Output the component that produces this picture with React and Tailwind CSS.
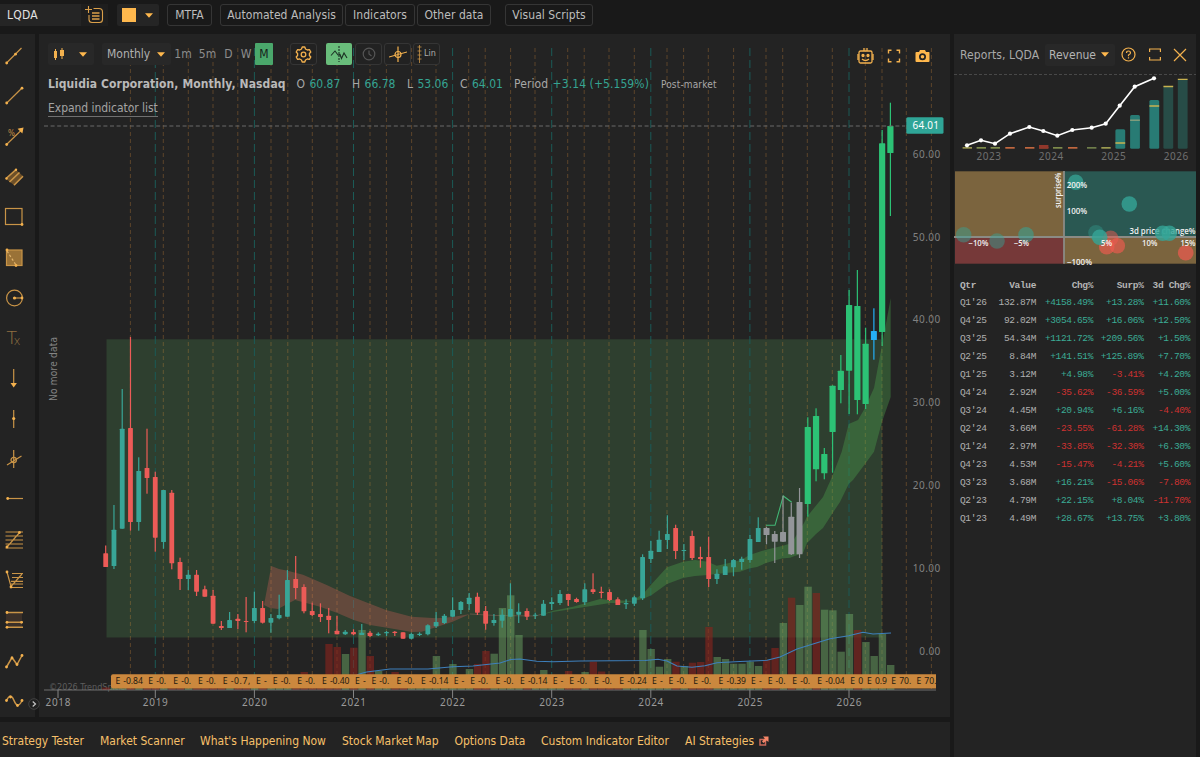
import React from "react";

const ACCENT = "#f3b14e";

/* ---------- market data (canvas coordinates of the price pane) ---------- */
const X0 = 105.7;
const STEP = 8.26;
const cx = (i) => X0 + i * STEP;

// [kind, high, body top, body bottom, low]
const candles = [
  ["r", 545.5, 553.3, 567, 567], ["t", 505, 529.7, 566, 569], ["t", 389, 428.7, 528.7, 528.7],
  ["r", 337, 428, 522, 530.7], ["t", 457.3, 471, 522, 530.7], ["r", 428.7, 468, 478, 493.7],
  ["r", 471.7, 477, 537.7, 551.7], ["t", 490, 490, 542, 548.7], ["r", 490, 492.7, 563.3, 569.3],
  ["r", 557.7, 562, 579, 590], ["t", 570, 574.7, 579, 590], ["r", 570, 574.7, 591.7, 596],
  ["r", 585.7, 589.3, 596.7, 596.7], ["r", 590, 595.7, 623.7, 623.7], ["r", 621, 626, 628, 630],
  ["t", 612, 620, 628, 628], ["r", 614, 618.7, 621, 629], ["r", 597, 621, 622, 632.3],
  ["t", 591.7, 608, 621, 623.3], ["r", 601, 608, 622.7, 623.5], ["t", 614, 618, 622.7, 632.7],
  ["t", 594.7, 615, 618.3, 619.3], ["t", 570, 580, 616.7, 616.7], ["r", 556, 579, 588, 599],
  ["r", 584.3, 587, 611.3, 613.3], ["r", 602.7, 611, 615, 616], ["r", 603.3, 614, 617, 622],
  ["r", 608, 615.7, 620, 633.3], ["r", 616, 630.7, 634.3, 634.3], ["t", 630, 631.7, 634.3, 635],
  ["r", 629.3, 632, 634.3, 635.3], ["t", 624, 632.7, 635, 635], ["r", 631, 632.7, 636, 637],
  ["t", 632.3, 633.7, 635.3, 636], ["t", 631, 632, 633.3, 636], ["r", 631, 631.7, 633, 636],
  ["r", 632.3, 632.3, 638.7, 638.7], ["t", 632.7, 634, 638.7, 639.3], ["t", 632.3, 633.7, 635, 636],
  ["t", 624.3, 625.3, 634.3, 635.3], ["t", 612, 622, 626.3, 628], ["t", 614, 615.7, 623, 624],
  ["t", 597.3, 610, 616.7, 616.7], ["t", 601, 602, 610, 614], ["t", 593, 597.7, 604, 610],
  ["r", 592.7, 596.7, 612.7, 615], ["r", 606, 611, 623.7, 629.7], ["t", 614, 620, 623, 625.7],
  ["t", 609.3, 614.7, 620.7, 627.7], ["t", 583.3, 609, 616.7, 616.7], ["t", 603.3, 611.7, 614.7, 623],
  ["r", 608.3, 611, 616.7, 620], ["t", 612.7, 614.7, 615.5, 619], ["t", 600, 603.7, 615.7, 615.7],
  ["t", 597.3, 602, 604, 610], ["t", 590, 594, 603, 605], ["r", 593.7, 594, 600, 606],
  ["r", 597.7, 599, 602, 602.7], ["t", 583.3, 589.3, 602.3, 605], ["r", 573.3, 589.3, 592, 594],
  ["r", 586.7, 591.7, 593, 598.3], ["r", 589.3, 592, 600, 601], ["r", 597.3, 599.3, 605, 605],
  ["t", 599.3, 603, 604.3, 609], ["t", 595.7, 597.3, 603.7, 606], ["t", 554.3, 557, 598.3, 600],
  ["t", 541, 550.7, 559, 563], ["t", 530.7, 539.7, 552, 552], ["t", 515.3, 534, 540, 549],
  ["r", 524.7, 528, 551, 559], ["t", 544, 550, 551, 560], ["r", 530.7, 536, 558, 560],
  ["r", 546.7, 557, 559, 567.7], ["r", 536.7, 557, 579, 587], ["t", 569.3, 573.7, 579, 584],
  ["t", 559, 566.3, 575, 575], ["t", 559, 560, 567.3, 576], ["t", 556.7, 558.7, 562, 569.7],
  ["t", 535, 539, 560, 562.7], ["t", 517.3, 528, 542, 542], ["g", 526.7, 528, 535, 544.3],
  ["g", 531, 534, 541.7, 563], ["g", 495.7, 532, 541.7, 542], ["g", 502.7, 516.7, 554.3, 555],
  ["g", 488, 502, 554.3, 558], ["b", 417.3, 427, 504, 516.7], ["b", 408.3, 416, 469.3, 481.3],
  ["b", 448, 454, 473.3, 479.3], ["b", 385.3, 385.7, 432, 472.7], ["b", 355, 370.7, 390, 403.3],
  ["b", 290, 305, 370.7, 414], ["b", 270, 306, 400, 414.3], ["b", 327.7, 343.7, 404, 409],
  ["c", 308.3, 331, 340, 359.7], ["b", 130, 143.3, 332, 346], ["b", 102.7, 126, 153, 216],
];
const candleFill = { r: "#ec5b57", t: "#38a597", g: "#939599", b: "#2cc275", c: "#25aef4" };
const candleWidth = { r: 4.8, t: 4.8, g: 6, b: 6.2, c: 6 };

// month index -> [direction, top]
const volume = {
  24: ["r", 672], 27: ["r", 644], 28: ["r", 647], 29: ["g", 654], 30: ["r", 647.7], 31: ["g", 630],
  32: ["r", 656], 33: ["g", 671], 35: ["r", 672], 40: ["g", 656], 42: ["g", 664], 44: ["g", 669],
  45: ["r", 664], 46: ["r", 651], 47: ["g", 653.7], 48: ["g", 608], 49: ["g", 595.3], 50: ["g", 635],
  51: ["r", 674], 53: ["g", 670], 56: ["r", 671], 58: ["g", 672], 59: ["r", 661.7], 60: ["r", 671.5],
  65: ["g", 630], 66: ["g", 649], 67: ["g", 666.7], 68: ["g", 659], 69: ["r", 661.7], 70: ["g", 666],
  71: ["r", 662.7], 72: ["r", 662], 73: ["r", 627], 74: ["g", 657], 75: ["g", 659], 76: ["g", 663.7],
  77: ["g", 663.7], 78: ["g", 661.7], 79: ["g", 666], 80: ["r", 660], 81: ["r", 648], 82: ["g", 623],
  83: ["r", 597.7], 84: ["g", 605], 85: ["g", 586.7], 86: ["r", 593], 87: ["g", 609.7], 88: ["g", 610.3],
  89: ["g", 651.7], 90: ["g", 614], 91: ["r", 630], 92: ["g", 642], 93: ["g", 656], 94: ["g", 634],
  95: ["g", 665],
};

const earnings = [
  [130.4, "-0.84"], [163.3, "-0."], [188.3, "-0."], [213, "-0."], [237.8, "-0.7,"], [271, "-"],
  [287.8, "-0."], [312.3, "-0."], [337, "-0.40"], [370, "-"], [386.4, "-0."], [411.6, "-0."],
  [436, "-0.14"], [468.7, "-"], [485.2, "-0."], [510.6, "-0."], [535, "-0.14"], [567.7, "-"],
  [584.2, "-0."], [609, "-0."], [634.3, "-0.24"], [667, "-"], [683.6, "-0."], [708.3, "-0."],
  [733.6, "-0.39"], [766, "-"], [782.7, "-0."], [807.3, "-0."], [832.3, "-0.04"], [865.3, "0"],
  [882, "0.9"], [906.3, "70."], [931.4, "70."],
];
const years = [2019, 2020, 2021, 2022, 2023, 2024, 2025, 2026].map((y, k) => [y, 155.3 + k * 99.1]);

const UI = "font-['DejaVu_Sans_Condensed','DejaVu_Sans','Noto_Sans',sans-serif]";
const AXIS = "font-['Noto_Sans','Open_Sans',sans-serif]";
const TINY = "font-['Open_Sans','Noto_Sans',sans-serif] font-semibold";

function PriceChart() {
  return (
    <svg className="col-start-1 row-start-1 block" width="911" height="683" viewBox="39 34 911 683">
      <rect x="106.5" y="339.3" width="775.7" height="298.2" fill="#2e3f2f" />
      {years.map(([y, x]) => (
        <line key={y} x1={x} x2={x} y1="48" y2="690" stroke="#1b5b57" strokeWidth="1" strokeDasharray="8 4" />
      ))}
      {earnings.map(([x]) => (
        <line key={x} x1={x} x2={x} y1="48" y2="690" stroke="#f09a3e" strokeOpacity=".28" strokeWidth="1" strokeDasharray="4 3" />
      ))}
      <text x="49" y="690" fontSize="9" fill="#5d5d5d" className={UI}>©2026 TrendSpider</text>

      <path
        d="M264 605L271.3 566L279 569L287.7 570.7L303 574.7L326.7 585L350 596L386 610L411.7 616.7L436.7 618.3L452.7 617L470 614L452.7 621.7L436.7 627L421.7 631.7L411.7 632L387 627.7L370 625L353.7 620L336.7 612.7L320 606.7L295 600L289 603L278 609L270 608Z"
        fill="#e8645c" fillOpacity=".29"
      />
      <path d="M470 614L495 615.5L536 616L545 613" fill="none" stroke="#b8766c" strokeOpacity=".35" />
      <path
        d="M540 615L553 610.7L573 606.7L600 599L610 600L633 601L645 591.7L651.7 584L667 567.3L683 561.7L695 560L708 561.7L716.7 565.7L725 564L741 560L749.5 555L766 549.7L783 545.7L791.7 543L804 523L807 516.7L823 497L832 477L841.7 451.7L848.7 424L858 420L865 408L874 388L882 345L890.7 298L890.7 397L882 421.7L874 451.7L865 464L853 480L848.7 484L840 502L832 514L823 528L816 534L807 543L803 553L790 557.7L781.7 558.5L766 563L757 567L749 568.5L740 571.7L725 573L708 575L695 576L683 578L667 584L651.7 595L643 599L623 603L610 603L580 607.7L553 612Z"
        fill="#4fae50" fillOpacity=".34"
      />

      {candles.map(([kind], i) => {
        const v = volume[i] || [kind === "r" ? "r" : "g", 687.5];
        return (
          <rect
            key={i} x={cx(i) - 3.4} y={v[1]} width="7.4" height={690 - v[1]}
            fill={v[0] === "r" ? "#8a231d" : "#6ba563"} fillOpacity={v[0] === "r" ? 0.6 : 0.5}
          />
        );
      })}
      <path
        d="M356.7 675Q362 673 366.7 672L390 669L428 669L452.7 666.7L473 666L500 663L510.7 659.5L520 659L536.7 661.3L553 661.7L580 661L613 660.7L645 660.5L658 659.3L667 661L677 666L692 667.3L705 665.7L717 662.7L740 661.5L767 660.3L780 657L797 649L813 644L830 638.7L848.7 635.7L863 632.3L873 634L891 633"
        fill="none" stroke="#3e80bd" strokeWidth="1.1"
      />

      <path d="M766 525.3L775 525.3L783.3 496L791.7 502.3" fill="none" stroke="#42b775" strokeWidth="1.1" />
      {candles.map(([k, h, t, b, l], i) => (
        <g key={i} fill={candleFill[k]}>
          <rect x={cx(i) - 0.6} y={h} width="1.2" height={Math.max(1, l - h)} />
          <rect x={cx(i) - candleWidth[k] / 2} y={t} width={candleWidth[k]} height={Math.max(1, b - t)} rx=".6" />
        </g>
      ))}

      <line x1="44" x2="905" y1="126" y2="126" stroke="#6b6b6b" strokeWidth="1" strokeDasharray="4 2.6" />
      <rect x="906.3" y="117.3" width="37.2" height="16.4" rx="1.5" fill="#2fa597" />
      <text x="912.5" y="129.2" fontSize="10" fill="#fff" textLength="26.5" className={AXIS}>64.01</text>

      {[60, 50, 40, 30, 20, 10, 0].map((p) => (
        <text
          key={p} x="940.3" y={654.8 - p * 8.285} textAnchor="end" fontSize="10" fill="#818181"
          textLength={p ? 27.5 : 21} className={AXIS}
        >
          {p.toFixed(2)}
        </text>
      ))}
      <text transform="translate(57 401) rotate(-90)" fontSize="10" fill="#858585" textLength="64" className={UI}>No more data</text>

      {/* earnings ribbon */}
      <path d="M113 674.3H936V688.5H113Q111 688.5 111 686.5V676.3Q111 674.3 113 674.3Z" fill="#cb883e" />
      {earnings.map(([x, v]) => (
        <text key={x} x={x - 15} y="684.4" fontSize="8.6" fill="#241a10" className={AXIS}>
          <tspan>E</tspan><tspan x={x - 7.1} textLength={v.length > 4 ? 19.5 : undefined}>{v}</tspan>
        </text>
      ))}

      <line x1="44" x2="936" y1="690" y2="690" stroke="#8a8a8a" strokeOpacity=".75" />
      {[[2018, 58], ...years].map(([y, x]) => (
        <g key={y}>
          <line x1={x} x2={x} y1="690" y2="698" stroke="#858585" />
          <text x={x} y="706.2" textAnchor="middle" fontSize="10" fill="#9a9a9a" textLength="25" className={AXIS}>{y}</text>
        </g>
      ))}
    </svg>
  );
}

/* ---------- small pieces ---------- */
function Caret() {
  return <svg width="8" height="5" viewBox="0 0 8 5" className="shrink-0"><path d="M0 .3H8L4 4.8Z" fill="#ffb84d" /></svg>;
}

function MenuButton({ children, className }) {
  return (
    <button className={`flex h-[22px] shrink-0 items-center justify-center whitespace-nowrap rounded-[3px] border border-[#353535] text-[12px] tracking-[0.05px] text-[#bdbdbd] ${className}`}>
      {children}
    </button>
  );
}

function Tool({ children }) {
  return (
    <div className="flex h-[40.3px] w-7 shrink-0 items-center justify-center">
      <svg width="20" height="20" viewBox="0 0 20 20" fill="none" stroke="#c99447" strokeWidth="1.2" className="overflow-visible">
        {children}
      </svg>
    </div>
  );
}
const Dot = ({ x, y, r = 1.4 }) => <circle cx={x} cy={y} r={r} fill={ACCENT} stroke="none" />;

function Sidebar() {
  return (
    <aside className="flex h-[683px] w-[35px] shrink-0 flex-col bg-[#232323] pt-[2px]">
      <Tool><path d="M2.5 17L17.5 2" /><Dot x="2.7" y="17" /><Dot x="11.5" y="8.2" /></Tool>
      <Tool><path d="M2.5 17.3L18 2" /><Dot x="2.7" y="17" /><Dot x="18" y="2.2" /></Tool>
      <Tool><path d="M2.5 17.5L17 3.5" /><Dot x="2.7" y="17.5" /><path d="M18.8 1.2L18 5.2L14.8 2Z" fill={ACCENT} stroke={ACCENT} /><text x="4" y="9" fontSize="8" fill="#c99447" stroke="none" className={UI}>%</text></Tool>
      <Tool><path d="M2 12L12 3L19 9L10 18Z" fill="#6d5029" stroke="none" /><path d="M2 11.5L12 2.7M5.500 15L15.500 5.500M10 18.300L19 9.200" strokeWidth="1.6" /><Dot x="12" y="2.7" r="1.2" /><Dot x="2.5" y="11.5" r="1.2" /></Tool>
      <Tool><rect x="1.5" y="1.5" width="16.5" height="16" /><Dot x="18" y="17.5" /></Tool>
      <Tool><rect x="2.5" y="2" width="15.5" height="15.5" fill="#9a7237" /><path d="M3 3L12 17" stroke="#e0b36c" strokeDasharray="2.5 2" /><Dot x="3" y="2" /><Dot x="12" y="17.5" /></Tool>
      <Tool><circle cx="10.5" cy="10" r="7.9" /><path d="M10.5 10H18" /><Dot x="10.5" y="10" r="1.6" /><Dot x="18" y="10" /></Tool>
      <Tool><text x="2.5" y="15.500" fontSize="18" fill="#8f6f41" stroke="none" className="font-['Lato'] font-light">T</text><text x="10" y="16.500" fontSize="13" fill="#8f6f41" stroke="none" className="font-['Lato'] font-light">x</text></Tool>
      <Tool><path d="M9.7 0V15" /><path d="M6.5 14H12.9L9.7 18.5Z" fill={ACCENT} stroke="none" /></Tool>
      <Tool><path d="M9.7 1V19" /><Dot x="9.7" y="9.5" r="1.6" /></Tool>
      <Tool><path d="M9.7 1V19M3 16L17.5 7" /><circle cx="9.7" cy="11" r="2.7" /></Tool>
      <Tool><path d="M3 9.5H19" /><Dot x="3.7" y="9.5" /></Tool>
      <Tool><path d="M1.5 2H19M1.5 6H19M1.5 10H19M1.5 14H19M1.5 18H19M3 17L16 2" /><Dot x="3" y="17" /><Dot x="15.5" y="2.5" /></Tool>
      <Tool><path d="M8 3.5H19M8 7.5H19M7 11.3H19M7 14H19M7 17.5H19M3 2L7 16.5L18 4" /><Dot x="3" y="2" /><Dot x="7" y="17" /></Tool>
      <Tool><rect x="2" y="2" width="16" height="15" fill="#3b3029" stroke="none" /><path d="M2 2.5H19M2 12.3H19M2 17.3H19" strokeWidth="1.5" /><Dot x="3" y="2.5" /><Dot x="3" y="12.3" /><Dot x="17.5" y="12.3" /><Dot x="3" y="17.3" /></Tool>
      <Tool><path d="M2.5 16L8 6.5L13 13.5L18 4.5" strokeWidth="1.5" /><Dot x="2.5" y="16" /><Dot x="8" y="7" /><Dot x="13" y="13.5" /><Dot x="18" y="4.5" /></Tool>
      <Tool><path d="M2.5 9.5C5.5 3 8 4.5 10 9.5S14.5 17 18 9.5" strokeWidth="1.5" /><Dot x="2.5" y="9.5" /><Dot x="6.5" y="6" /><Dot x="13.5" y="14.5" /><Dot x="18" y="9.5" /></Tool>
    </aside>
  );
}

function TopBar() {
  return (
    <header className="flex h-[34px] shrink-0 items-start pt-1">
      <div className="flex h-[22px] w-[81px] items-center bg-[#252525] pl-[7px] text-[12px] tracking-[0.2px] text-[#e2e2e2]">LQDA</div>
      <div className="flex h-[22px] w-[27px] items-center justify-center bg-[#1e1e1e]">
        <svg width="20" height="20" viewBox="0 0 20 20" fill="none" stroke="#dba04a" strokeWidth="1.1" className="-translate-x-px -translate-y-px">
          <path d="M1 5.5H8M4.5 2V9M9.5 4.5H15Q18.5 4.5 18.5 8V15.5Q18.5 18.5 15.5 18.5H8Q5 18.5 5 15.5V11" />
          <path d="M8 9H15.5M8 12H15.5M8 15H15.5" strokeWidth="1.3" />
        </svg>
      </div>
      <div className="ml-[9px] mr-2 flex h-[22px] w-[42px] items-center gap-[9px] rounded-[2px] bg-[#252525] pl-[5px]">
        <span className="size-[14px] bg-[#ffb84d]" /><Caret />
      </div>
      <MenuButton className="mr-2 w-[45px]">MTFA</MenuButton>
      <MenuButton className="mr-0.5 w-[123px]">Automated Analysis</MenuButton>
      <MenuButton className="mr-0.5 w-[70px]">Indicators</MenuButton>
      <MenuButton className="mr-[14px] w-[74px]">Other data</MenuButton>
      <MenuButton className="w-[88px]">Visual Scripts</MenuButton>
    </header>
  );
}

function ChartToolbar() {
  const box = "flex h-[22px] w-[27px] shrink-0 items-center justify-center rounded-[3px] border border-[#353535] bg-[#222]";
  return (
    <div className="flex h-[22px] items-center text-[12px] text-[#8d8d8d]">
      <div className="flex h-[22px] w-[46px] items-center justify-between rounded-[2px] bg-[#282828] pl-[5px] pr-[7px]">
        <svg width="12" height="14" viewBox="0 0 12 14" fill={ACCENT}><path d="M1 4H4V11H1ZM2 2H3V13H2ZM7 3H11V9H7ZM8.500 1H9.500V12H8.500Z" /></svg>
        <Caret />
      </div>
      <div className="ml-2 flex h-[22px] w-[69px] items-center gap-[7px] rounded-[2px] bg-[#282828] pl-[5px] text-[#b0b0b0]">Monthly <Caret /></div>
      <span className="w-6 text-center">1m</span>
      <span className="w-[25px] text-center">5m</span>
      <span className="w-[17px] text-center">D</span>
      <span className="w-[18px] text-center">W</span>
      <span className="flex h-[22px] w-[18px] items-center justify-center rounded-[1px] bg-[#4aa76b] text-[#17221b]">M</span>
      <div className={`${box} ml-[17px]`}>
        <svg width="17" height="17" viewBox="0 0 17 17" fill="none" stroke={ACCENT} strokeWidth="1.3" strokeLinejoin="round">
          <path d="M6.5 3L7.2 1H9.8L10.5 3L12.3 4L14.4 3.6L15.8 6L14.4 7.5V9.5L15.8 11L14.4 13.4L12.3 13L10.5 14L9.8 16H7.2L6.5 14L4.7 13L2.6 13.4L1.2 11L2.6 9.5V7.5L1.2 6L2.6 3.6L4.7 4Z" />
          <circle cx="8.5" cy="8.5" r="2.3" />
        </svg>
      </div>
      <div className="ml-[9px] flex h-[22px] w-[26px] items-center justify-center rounded-[2px] bg-[#69bd7b]">
        <svg width="18" height="18" viewBox="0 0 18 18" fill="none" stroke="#1b3023" strokeWidth="1.1">
          <path d="M1 10.500L5 6L8 10L10 9.500L11.500 13.500L14 8L17 13" /><path d="M9 1V17" strokeDasharray="2 1" />
        </svg>
      </div>
      <div className={`${box} ml-[3px]`}>
        <svg width="14" height="14" viewBox="0 0 14 14" fill="none" stroke="#555" strokeWidth="1.2"><circle cx="7" cy="7" r="5.8" /><path d="M7 3.500V7L9.500 9" /></svg>
      </div>
      <div className={`${box} ml-0.5`}>
        <svg width="18" height="18" viewBox="0 0 18 18" fill="none" stroke={ACCENT} strokeWidth="1.2"><path d="M9 1.500V17M0 12L18 7" /><circle cx="9" cy="9.5" r="3" /></svg>
      </div>
      <div className={`${box} ml-[2px] gap-[2px] text-[9px] text-[#ababab]`}>
        <svg width="5" height="18" viewBox="0 0 5 18" stroke="#c99447" fill="none"><path d="M2.500 0V18M.5 2H4.500M.5 6H4.500M.5 10H4.500M.5 14H4.500" strokeWidth=".8" /></svg>
        Lin
      </div>
      <div className="ml-[417px] flex shrink-0 translate-y-[2px] items-center gap-[13px]">
        <svg width="17" height="17" viewBox="0 0 17 17" fill="none" stroke={ACCENT} strokeWidth="1.3">
          <path d="M7 3V0M10 3V0M1 6V12M16 6V12" /><rect x="2" y="3" width="13" height="12" rx="1.5" />
          <circle cx="6" cy="7.5" r="1" fill={ACCENT} /><circle cx="11" cy="7.5" r="1" fill={ACCENT} /><path d="M5 11Q8.500 14 12 11" />
        </svg>
        <svg width="14" height="14" viewBox="0 0 14 14" fill="none" stroke={ACCENT} strokeWidth="1.4"><path d="M1.500 4.500V1.200H4.500M9.500 1.200H12.500V4.500M12.500 9.500V12.800H9.500M4.500 12.800H1.500V9.500" /></svg>
        <svg width="15" height="14" viewBox="0 0 15 14" fill="#ffb84d" className="ml-[1px]"><path fillRule="evenodd" d="M5 1H10L11 3H14Q14.500 3 14.500 4V12Q14.500 13 13.500 13H1.500Q.5 13 .5 12V4Q.5 3 1.500 3H4ZM7.500 4.300A3.500 3.500 0 1 0 7.500 11.300A3.500 3.500 0 1 0 7.500 4.300ZM7.500 6A1.800 1.800 0 1 1 7.500 9.600A1.800 1.800 0 1 1 7.500 6Z" /></svg>
      </div>
    </div>
  );
}

function Quote() {
  const item = "shrink-0 whitespace-nowrap";
  const num = "ml-px font-normal text-[#35a493]";
  return (
    <div className="mt-[9px] flex h-5 items-center pl-px text-[12px] text-[#a8a8a8] -translate-x-px">
      <strong className={`${item} w-[248.5px] text-[12px] font-bold tracking-[0.09px] text-[#b9b9b9]`}>Liquidia Corporation, Monthly, Nasdaq</strong>
      <span className={`${item} w-[55.5px]`}>O <b className={num}>60.87</b></span>
      <span className={`${item} w-[55px]`}>H <b className={num}>66.78</b></span>
      <span className={`${item} w-[53px]`}>L <b className={num}>53.06</b></span>
      <span className={`${item} w-[54px]`}>C <b className={num}>64.01</b></span>
      <span className={`${item} w-[147px] tracking-[0.08px]`}>Period <b className={num}>+3.14 (+5.159%)</b></span>
      <span className={`${item} text-[10px] tracking-[0.15px]`}>Post-market</span>
    </div>
  );
}

/* ---------- reports panel ---------- */
const rows = [
  ["Q1'26", "132.87M", "+4158.49%", "+13.28%", "+11.60%"],
  ["Q4'25", "92.02M", "+3054.65%", "+16.06%", "+12.50%"],
  ["Q3'25", "54.34M", "+1121.72%", "+209.56%", "+1.50%"],
  ["Q2'25", "8.84M", "+141.51%", "+125.89%", "+7.70%"],
  ["Q1'25", "3.12M", "+4.98%", "-3.41%", "+4.20%"],
  ["Q4'24", "2.92M", "-35.62%", "-36.59%", "+5.00%"],
  ["Q3'24", "4.45M", "+20.94%", "+6.16%", "-4.40%"],
  ["Q2'24", "3.66M", "-23.55%", "-61.28%", "+14.30%"],
  ["Q1'24", "2.97M", "-33.85%", "-32.30%", "+6.30%"],
  ["Q4'23", "4.53M", "-15.47%", "-4.21%", "+5.60%"],
  ["Q3'23", "3.68M", "+16.21%", "-15.06%", "-7.80%"],
  ["Q2'23", "4.79M", "+22.15%", "+8.04%", "-11.70%"],
  ["Q1'23", "4.49M", "+28.67%", "+13.75%", "+3.80%"],
];
const trend = [[967, 145.3], [981, 140.3], [995, 143.7], [1010, 133.7], [1029.3, 127], [1043.3, 131], [1057.3, 135.7], [1072.3, 130], [1091.7, 127.7], [1105.7, 123.7], [1119.7, 105.7], [1134.7, 86.7], [1154, 78.3]];

function RevenueTrend() {
  return (
    <svg className="block shrink-0" width="242" height="97" viewBox="954 74 242 97">
      <line x1="954" x2="1196" y1="74.5" y2="74.5" stroke="#484848" strokeDasharray="3 2" />
      {[[967.3, "#96934c"], [981.3, "#7d8a4b"], [995.3, "#7d8a4b"], [1010, "#c0673f"], [1029.7, "#c0673f"], [1043.7, "#a8442f"], [1057.7, "#7d8a4b"], [1072.7, "#c0673f"], [1091.7, "#6e7d4a"], [1106, "#9a9a50"]].map(([x, c]) => (
        <rect key={x} x={x - 4.7} y="147" width="9.4" height="1.7" fill={c} />
      ))}
      <rect x="1039" y="145" width="9.4" height="3" fill="#91372b" />
      {[[1120.3, 129.3, "#287b74"], [1135, 115, "#287b74"], [1154.3, 100, "#287b74"], [1168.3, 86.5, "#274c47"], [1182.7, 79, "#274c47"]].map(([x, y, c]) => (
        <rect key={x} x={x - 4.9} y={y} width="9.8" height={148.7 - y} rx="1.5" fill={c} />
      ))}
      <path d="M1115.4 143H1125.2M1149.4 106H1159.2M1163.4 86.5H1173.2M1177.8 79.3H1187.6" stroke="#c8b250" strokeWidth="1.3" />
      <path d="M1130.1 120.2H1139.9" stroke="#8fa27e" strokeWidth="1.3" />
      <polyline points={trend.map((p) => p.join(",")).join(" ")} fill="none" stroke="#fff" strokeWidth="1.6" />
      {trend.map(([x, y]) => <circle key={x} cx={x} cy={y} r="2.1" fill="#fff" />)}
      {[2023, 2024, 2025, 2026].map((y, i) => (
        <text key={y} x={988.7 + i * 62.4} y="160.2" textAnchor="middle" fontSize="10" fill="#707070" textLength="24.5" className={AXIS}>{y}</text>
      ))}
    </svg>
  );
}

function SurpriseScatter() {
  const dots = [
    [963.7, 234.7, "t", 0.45], [997, 241, "t", 0.45], [1026, 234.7, "t", 0.55], [1075.7, 182.3, "t", 0.75],
    [1129.3, 204, "t", 0.8], [1096, 232.7, "t", 0.35], [1110.7, 238.3, "r", 0.5], [1106.7, 246.7, "r", 0.65],
    [1117.3, 245.7, "r", 0.65], [1099.7, 237.3, "t", 0.8], [1162.7, 233.3, "t", 0.8], [1169.3, 233.3, "t", 0.8],
    [1185.7, 252.7, "r", 0.7],
  ];
  const labels = [["200%", 1066.7, 187.5, 20.5], ["100%", 1066.7, 214, 20.5], ["−10%", 968.5, 246, 20], ["−5%", 1014, 246, 15], ["5%", 1101, 246, 11], ["10%", 1142, 246, 15.5], ["15%", 1180.5, 246, 15], ["−100%", 1067, 265.2, 25]];
  const tick = { fontSize: 8, fill: "#f1f1f1", lengthAdjust: "spacingAndGlyphs", className: TINY };
  return (
    <svg className="block shrink-0" width="242" height="96" viewBox="954 171 242 96">
      <rect x="955" y="171.3" width="109" height="65.7" fill="#7b643e" />
      <rect x="1064" y="171.3" width="132" height="65.7" fill="#2a5852" />
      <rect x="955" y="237" width="109" height="26.7" fill="#763939" />
      <rect x="1064" y="237" width="132" height="26.7" fill="#7b643e" />
      <path d="M1064 171V263.7M954 237H1196" stroke="#8b8b85" strokeWidth="1.8" />
      <text x="1129.5" y="234" textLength="66" {...tick}>3d price change%</text>
      {dots.map(([x, y, c, o]) => <circle key={x} cx={x} cy={y} r="7.8" fill={c === "t" ? "#35a597" : "#ef5a50"} fillOpacity={o} />)}
      {labels.map(([t, x, y, w]) => <text key={t} x={x} y={y} textLength={w} {...tick}>{t}</text>)}
      <text transform="translate(1060.5 208) rotate(-90)" textLength="35.5" {...tick}>surprise%</text>
    </svg>
  );
}

function Reports() {
  const grid = "grid grid-cols-[28px_48px_57px_50.5px_46.5px] items-center text-right";
  return (
    <aside className="flex w-[242px] shrink-0 flex-col bg-[#232323]">
      <div className="flex h-10 shrink-0 items-center pl-1.5 pt-px text-[12px] text-[#a9a9a9]">
        <span className="w-[85px] whitespace-nowrap tracking-[0.08px]">Reports, LQDA</span>
        <div className="flex h-[22px] w-[70px] items-center justify-between rounded-[2px] bg-[#282828] pl-1 pr-[6px] text-[#b5b5b5]">Revenue <Caret /></div>
        <div className="ml-[6px] flex items-center">
          <svg width="15" height="15" viewBox="0 0 15 15" fill="none" stroke={ACCENT} strokeWidth="1.2"><circle cx="7.5" cy="7.5" r="6.5" /><path d="M5.500 6Q5.500 4 7.500 4T9.500 6Q9.500 7 7.500 8V9.300M7.500 10.300V11.500" /></svg>
          <svg width="12" height="13" viewBox="0 0 12 13" fill="none" stroke={ACCENT} strokeWidth="1.2" className="ml-[13px]"><path d="M.6 4V1H11.400V4M.6 9V12H11.400V9" /></svg>
          <svg width="14" height="14" viewBox="0 0 14 14" fill="none" stroke={ACCENT} strokeWidth="1.2" className="ml-[12px]"><path d="M1 1L13 13M13 1L1 13" /></svg>
        </div>
      </div>
      <RevenueTrend />
      <SurpriseScatter />
      <div className="mt-[11px] pl-1.5 font-['Liberation_Mono',monospace] text-[9.5px] tracking-[-0.36px] text-[#b0b0b0]">
        <div className={`${grid} h-[16px] font-bold text-[#b5b5b5]`}>
          <span className="text-left">Qtr</span><span>Value</span><span>Chg%</span><span>Surp%</span><span className="whitespace-nowrap">3d Chg%</span>
        </div>
        {rows.map((r) => (
          <div key={r[0]} className={`${grid} h-[18px]`}>
            <span className="text-left">{r[0]}</span>
            <span>{r[1]}</span>
            {r.slice(2).map((v, i) => <span key={i} className={v[0] === "+" ? "text-[#3bab95]" : "text-[#cf3231]"}>{v}</span>)}
          </div>
        ))}
      </div>
    </aside>
  );
}

function BottomBar() {
  const link = "shrink-0 whitespace-nowrap";
  return (
    <nav className="flex h-[35px] shrink-0 items-center bg-[#232323] pl-0.5 pt-[3px] text-[12px] text-[#f7c06a]">
      <span className={`${link} w-[98px]`}>Strategy Tester</span>
      <span className={`${link} w-[100px]`}>Market Scanner</span>
      <span className={`${link} w-[142px]`}>What's Happening Now</span>
      <span className={`${link} w-[112.5px]`}>Stock Market Map</span>
      <span className={`${link} w-[86.5px]`}>Options Data</span>
      <span className={`${link} w-[144px]`}>Custom Indicator Editor</span>
      <span className={`${link} w-[74px]`}>AI Strategies</span>
      <svg width="10" height="10" viewBox="0 0 10 10"><path d="M1 3.500H6.500V9H1Z" fill="none" stroke="#c9695a" strokeWidth="1.5" /><path d="M4 .5H9.500V6L7.500 4.500L4.500 7L3 5.500L5.800 2.500Z" fill="#f58668" /></svg>
    </nav>
  );
}

export default function App() {
  return (
    <div className={`flex h-[757px] w-[1200px] overflow-hidden bg-[#191919] ${UI}`}>
      <div className="flex w-[1200px] flex-col">
        <TopBar />
        <div className="flex h-[723px]">
          <div className="flex w-[950px] shrink-0 flex-col justify-between">
            <div className="relative flex gap-1">
              <Sidebar />
              <main className="grid w-[911px] shrink-0 bg-[#232323]">
                <PriceChart />
                <div className="z-10 col-start-1 row-start-1 pl-[9px] pt-[9px]">
                  <ChartToolbar />
                  <Quote />
                  <span className="mt-[5px] inline-block h-[18px] whitespace-nowrap border-b border-[#707070] text-[12px] leading-[19px] tracking-[-0.04px] text-[#a3a3a3]">Expand indicator list</span>
                </div>
              </main>
              <svg className="absolute left-[28px] top-[664px] z-20" width="12" height="12" viewBox="0 0 12 12" fill="none"><circle cx="6" cy="6" r="5.3" fill="#202020" stroke="#424242" /><path d="M4.700 3.500L7.500 6L4.700 8.500" stroke="#c5c5c5" strokeWidth="1.2" /></svg>
            </div>
            <BottomBar />
          </div>
          <div className="ml-1 flex"><Reports /></div>
        </div>
      </div>
    </div>
  );
}
